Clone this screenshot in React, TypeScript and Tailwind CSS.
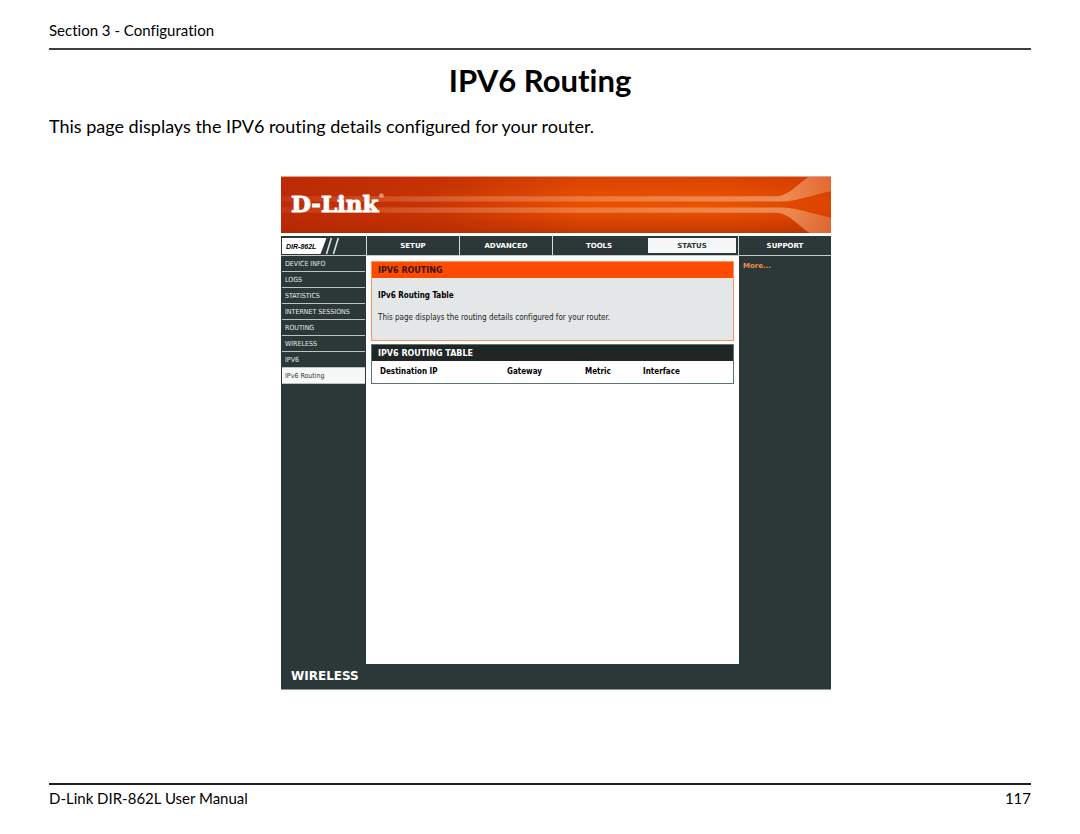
import { ReactNode } from 'react';

const tabs = ['SETUP', 'ADVANCED', 'TOOLS', 'STATUS', 'SUPPORT'];

const menu = [
  'DEVICE INFO',
  'LOGS',
  'STATISTICS',
  'INTERNET SESSIONS',
  'ROUTING',
  'WIRELESS',
  'IPV6',
  'IPv6 Routing',
];

function Banner() {
  return (
    <header className="relative flex h-[57px] items-center overflow-hidden bg-[#d94400] pl-[10px]">
      <svg className="absolute inset-0 h-full w-full" viewBox="0 0 550 56" preserveAspectRatio="none" aria-hidden="true">
        <defs>
          <linearGradient id="base" x1="0" x2="1" y1="0" y2="0">
            <stop offset="0" stopColor="#bd2a06" />
            <stop offset="0.28" stopColor="#c93404" />
            <stop offset="0.55" stopColor="#e85000" />
            <stop offset="0.8" stopColor="#ea5200" />
            <stop offset="1" stopColor="#dc4400" />
          </linearGradient>
          <linearGradient id="shade" x1="0" x2="0" y1="0" y2="1">
            <stop offset="0" stopColor="#b82c00" stopOpacity="0.35" />
            <stop offset="0.4" stopColor="#b82c00" stopOpacity="0" />
            <stop offset="0.6" stopColor="#b82c00" stopOpacity="0" />
            <stop offset="1" stopColor="#a82800" stopOpacity="0.6" />
          </linearGradient>
          <linearGradient id="stripe" gradientUnits="userSpaceOnUse" x1="0" x2="550" y1="0" y2="0">
            <stop offset="0" stopColor="#ef9a70" stopOpacity="0.1" />
            <stop offset="0.25" stopColor="#ef9a70" stopOpacity="0.35" />
            <stop offset="0.75" stopColor="#f0a070" stopOpacity="0.65" />
            <stop offset="0.92" stopColor="#f0a070" stopOpacity="0.75" />
            <stop offset="1" stopColor="#ec8450" stopOpacity="0.6" />
          </linearGradient>
        </defs>
        <rect width="550" height="56" fill="url(#base)" />
        <rect width="550" height="56" fill="url(#shade)" />
        <path d="M0 20H494C509 20 518 6 529 0H550V15C530 19 516 25 499 25H0Z" fill="url(#stripe)" />
        <path d="M0 36H494C509 36 518 50 529 56H550V41C530 37 516 31 499 31H0Z" fill="url(#stripe)" />
        <rect width="550" height="1" fill="#e3a08a" />
      </svg>
      <div className="relative flex items-start pb-0.5 font-['DejaVu_Serif',serif] text-white">
        <span className="text-[23px] leading-7 font-bold [-webkit-text-stroke:1px_white]">D-Link</span>
        <span className="text-[6px] leading-3">®</span>
      </div>
    </header>
  );
}

function Model() {
  return (
    <div className="relative flex w-[85px] items-center bg-[#2c3838] pt-0.5 pl-[5px]">
      <svg className="absolute inset-0 h-full w-full" viewBox="0 0 86 19" preserveAspectRatio="none" aria-hidden="true">
        <path d="M1 2H46L40 18H1Z" fill="#fff" />
        <path d="M51 2L46 18M58 2L53 18" stroke="#dfe5e5" strokeWidth="1.6" />
      </svg>
      <span className="relative font-['Liberation_Sans',sans-serif] text-[7px] leading-3 font-bold text-black italic">
        DIR-862L
      </span>
    </div>
  );
}

function Panel({ title, tone, children }: { title: string; tone: 'orange' | 'dark'; children: ReactNode }) {
  const orange = tone === 'orange';
  return (
    <section className={orange ? 'border border-[#f7955f] bg-[#e3e7e8]' : 'border border-[#5b7575] bg-white'}>
      <h2
        className={
          orange
            ? "bg-[#ff4b00] pt-px pl-1.5 font-['DejaVu_Sans',sans-serif] text-[8px] leading-[15px] font-bold text-[#3a1200]"
            : "bg-[#202626] pt-px pl-1.5 font-['DejaVu_Sans',sans-serif] text-[8px] leading-[15px] font-bold text-white"
        }
      >
        {title}
      </h2>
      {children}
    </section>
  );
}

function RouterPage() {
  return (
    <div className="w-full max-w-[550px] bg-white font-['DejaVu_Sans_Condensed','DejaVu_Sans',sans-serif]">
      <Banner />
      <nav className="mt-[3px] flex h-5 border-b border-[#c5caca]">
        <Model />
        <div className="grid flex-1 grid-cols-5 font-['DejaVu_Sans',sans-serif]">
          {tabs.map((tab) => (
            <a
              key={tab}
              href="#"
              className={
                tab === 'STATUS'
                  ? 'flex items-center justify-center border-2 border-l-3 border-[#2c3838] bg-[#f5f8f7] pt-px text-[7px] leading-3 font-bold text-[#2c3838]'
                  : 'flex items-center justify-center border-l border-[#d5dada] bg-[#2c3838] pt-px text-[7px] leading-3 font-bold text-white'
              }
            >
              {tab}
            </a>
          ))}
        </div>
      </nav>
      <div className="flex min-h-[408px]">
        <aside className="w-[85px] bg-[#2c3838] px-px">
          <ul className="flex flex-col">
            {menu.map((item) => (
              <li key={item} className="flex border-b border-[#b9c4c4]">
                <a
                  href="#"
                  className={
                    item === 'IPv6 Routing'
                      ? 'flex-1 bg-[#f5f8f7] pt-px pl-[3px] text-[7px] leading-[14px] whitespace-nowrap text-[#2c3838]'
                      : 'flex-1 pt-px pl-[3px] text-[7px] leading-[14px] whitespace-nowrap text-[#e6eaea]'
                  }
                >
                  {item}
                </a>
              </li>
            ))}
          </ul>
        </aside>
        <main className="flex flex-1 flex-col gap-[3px] px-[5px] pt-[5px]">
          <Panel title="IPV6 ROUTING" tone="orange">
            <div className="px-1.5 pt-3 pb-4">
              <h3 className="text-[8px] leading-3 font-bold text-black">IPv6 Routing Table</h3>
              <p className="mt-2.5 text-[8px] leading-3 text-[#222]">
                This page displays the routing details configured for your router.
              </p>
            </div>
          </Panel>
          <Panel title="IPV6 ROUTING TABLE" tone="dark">
            <table className="w-full table-fixed text-left text-[8px] leading-[22px] text-black">
              <thead>
                <tr>
                  <th className="w-[135px] pl-2">Destination IP</th>
                  <th className="w-[78px]">Gateway</th>
                  <th className="w-[58px]">Metric</th>
                  <th>Interface</th>
                </tr>
              </thead>
            </table>
          </Panel>
        </main>
        <aside className="w-[92px] bg-[#2c3838] px-1 pt-1">
          <a href="#" className="block font-['DejaVu_Sans',sans-serif] text-[7px] leading-3 font-bold text-[#f58a4b]">
            More...
          </a>
        </aside>
      </div>
      <footer className="border-b border-[#8f9999] bg-[#2c3838] pl-[10px] font-['DejaVu_Sans',sans-serif] text-[12px] leading-[25px] font-bold text-white">
        WIRELESS
      </footer>
    </div>
  );
}

export default function App() {
  return (
    <div className="flex min-h-screen flex-col bg-white px-[49px] pt-5 pb-[26px] font-['Lato',sans-serif] text-black [font-variant-ligatures:none]">
      <div className="border-b-2 border-[#404040] pb-2 text-[15px] leading-5">Section 3 - Configuration</div>
      <h1 className="mt-2.5 text-center text-[31px] leading-10 font-bold">IPV6 Routing</h1>
      <p className="mt-3.5 text-[18px] leading-6">
        This page displays the IPV6 routing details configured for your router.
      </p>
      <div className="mt-[38px] mb-10 flex justify-center pl-8">
        <RouterPage />
      </div>
      <div className="mt-auto flex justify-between border-t-2 border-[#202020] pt-[3px] text-[15px] leading-5">
        <span>D-Link DIR-862L User Manual</span>
        <span>117</span>
      </div>
    </div>
  );
}
